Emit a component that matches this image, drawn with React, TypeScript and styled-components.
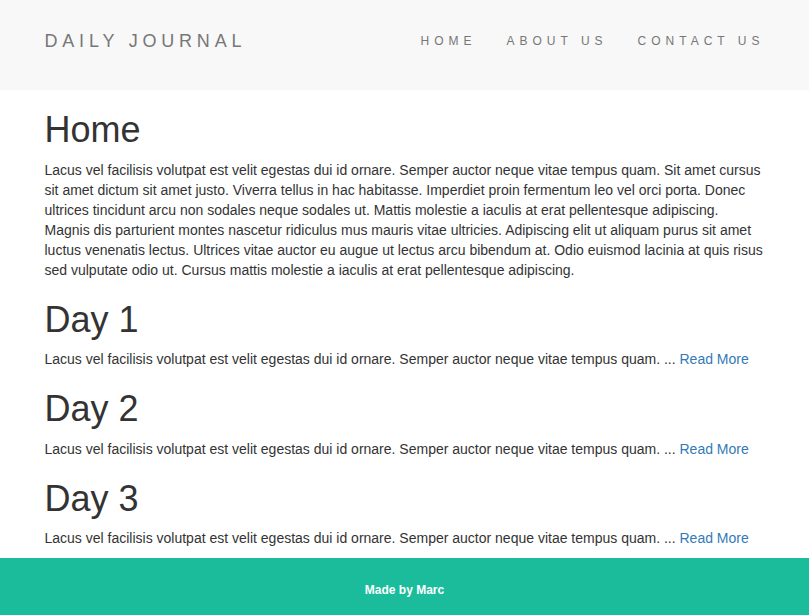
import React from "react";
import styled, { createGlobalStyle } from "styled-components";

// ==================== データ ====================

const intro =
  "Lacus vel facilisis volutpat est velit egestas dui id ornare. Semper auctor neque vitae tempus quam. Sit amet cursus sit amet dictum sit amet justo. Viverra tellus in hac habitasse. Imperdiet proin fermentum leo vel orci porta. Donec ultrices tincidunt arcu non sodales neque sodales ut. Mattis molestie a iaculis at erat pellentesque adipiscing. Magnis dis parturient montes nascetur ridiculus mus mauris vitae ultricies. Adipiscing elit ut aliquam purus sit amet luctus venenatis lectus. Ultrices vitae auctor eu augue ut lectus arcu bibendum at. Odio euismod lacinia at quis risus sed vulputate odio ut. Cursus mattis molestie a iaculis at erat pellentesque adipiscing.";

const excerpt =
  "Lacus vel facilisis volutpat est velit egestas dui id ornare. Semper auctor neque vitae tempus quam. ...";

const posts = ["Day 1", "Day 2", "Day 3"];
const navItems = ["Home", "About Us", "Contact Us"];

// ==================== スタイル ====================

const GlobalStyle = createGlobalStyle`
  * { box-sizing: border-box; }
  body {
    margin: 0;
    font-family: "Liberation Sans", Arial, Helvetica, sans-serif;
    font-size: 14px;
    line-height: 20px;
    color: #333;
    background: #fff;
  }
`;

const Navbar = styled.nav`
  background-color: #f8f8f8;
  height: 90px;
`;

const Container = styled.div`
  width: 750px;
  margin: 0 auto;
  padding: 0 15px;
`;

const NavInner = styled(Container)`
  height: 100%;
  padding-bottom: 8px;
  display: flex;
  align-items: center;
  justify-content: space-between;
`;

const Brand = styled.a`
  font-size: 18px;
  letter-spacing: 4.8px;
  color: #777;
  text-transform: uppercase;
  text-decoration: none;
`;

const NavList = styled.ul`
  display: flex;
  list-style: none;
  margin: 0 -15px 0 0;
  padding: 0;
`;

const NavLink = styled.a`
  display: block;
  padding: 0 15px;
  font-size: 12px;
  letter-spacing: 5px;
  color: #777;
  text-transform: uppercase;
  text-decoration: none;
`;

const Main = styled(Container)``;

const Heading = styled.h1`
  font-size: 36px;
  font-weight: 500;
  line-height: 1.1;
  margin: 20px 0 10px;
`;

const Text = styled.p`
  margin: 0 0 10px;
`;

const ReadMore = styled.a`
  color: #337ab7;
  text-decoration: none;
`;

const Footer = styled.footer`
  background-color: #1abc9c;
  padding: 22px 0;
  text-align: center;
  color: #fff;
  font-size: 12px;
  font-weight: bold;
`;

// ==================== コンポーネント ====================

const App: React.FC = () => {
  return (
    <>
      <GlobalStyle />
      <Navbar>
        <NavInner>
          <Brand href="#">Daily Journal</Brand>
          <NavList>
            {navItems.map((item) => (
              <li key={item}>
                <NavLink href="#">{item}</NavLink>
              </li>
            ))}
          </NavList>
        </NavInner>
      </Navbar>

      <Main>
        <Heading>Home</Heading>
        <Text>{intro}</Text>

        {posts.map((title) => (
          <section key={title}>
            <Heading>{title}</Heading>
            <Text>
              {excerpt} <ReadMore href="#">Read More</ReadMore>
            </Text>
          </section>
        ))}
      </Main>

      <Footer>Made by Marc</Footer>
    </>
  );
};

export default App;
